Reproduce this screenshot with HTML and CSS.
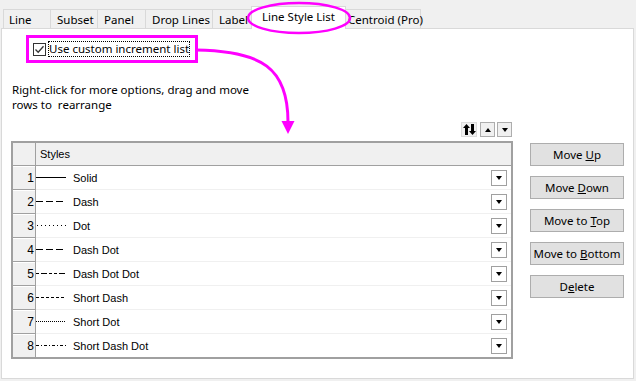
FILE: index.html
```html
<!DOCTYPE html>
<html>
<head>
<meta charset="utf-8">
<link rel="stylesheet" href="styles.css">
</head>
<body>
<div class="dialog">
  <div class="tabs">
    <div class="tab t-line">Line</div>
    <div class="tab t-subset">Subset</div>
    <div class="tab t-panel">Panel</div>
    <div class="tab t-drop">Drop Lines</div>
    <div class="tab t-label">Label</div>
    <div class="tab t-style active">Line Style List</div>
    <div class="tab t-centroid">Centroid (Pro)</div>
  </div>
  <div class="panel">
    <label class="check-frame">
      <span class="checkbox"><svg width="11" height="11" viewBox="0 0 11 11"><path d="M1.5 5.5 L4.2 8.3 L9.5 2.2" fill="none" stroke="#333" stroke-width="1.3"/></svg></span>
      <span class="check-label">Use custom increment list</span>
    </label>
    <p class="hint">Right-click for more options, drag and move<br>rows to&nbsp; rearrange</p>
    <div class="work">
      <div class="grid-col">
        <div class="grid-tools">
          <span class="tool sort"><svg width="13" height="11" viewBox="0 0 13 11"><path d="M3.5 0 L7 4 L5 4 L5 11 L2 11 L2 4 L0 4 Z" fill="#000"/><path d="M9.5 11 L6 7 L8 7 L8 0 L11 0 L11 7 L13 7 Z" fill="#000"/></svg></span>
          <span class="tool"><span class="tri-up"></span></span>
          <span class="tool"><span class="tri-down"></span></span>
        </div>
        <table class="grid">
          <thead>
            <tr><th class="corner"></th><th class="col-head">Styles</th></tr>
          </thead>
          <tbody>
            <tr><td class="rh">1</td><td class="cell"><div class="cell-in"><svg class="sample" width="30" height="3"><line x1="0" y1="1.5" x2="30" y2="1.5" stroke="#000" stroke-width="1"/></svg><span class="name">Solid</span><span class="dd"><span class="tri-down"></span></span></div></td></tr>
            <tr><td class="rh">2</td><td class="cell"><div class="cell-in"><svg class="sample" width="30" height="3"><line x1="0" y1="1.5" x2="30" y2="1.5" stroke="#000" stroke-width="1" stroke-dasharray="7 3"/></svg><span class="name">Dash</span><span class="dd"><span class="tri-down"></span></span></div></td></tr>
            <tr><td class="rh">3</td><td class="cell"><div class="cell-in"><svg class="sample" width="30" height="3"><line x1="1" y1="1.5" x2="30" y2="1.5" stroke="#000" stroke-width="1" stroke-dasharray="1 3"/></svg><span class="name">Dot</span><span class="dd"><span class="tri-down"></span></span></div></td></tr>
            <tr><td class="rh">4</td><td class="cell"><div class="cell-in"><svg class="sample" width="30" height="3"><line x1="0" y1="1.5" x2="30" y2="1.5" stroke="#000" stroke-width="1" stroke-dasharray="7 3"/></svg><span class="name">Dash Dot</span><span class="dd"><span class="tri-down"></span></span></div></td></tr>
            <tr><td class="rh">5</td><td class="cell"><div class="cell-in"><svg class="sample" width="30" height="3"><line x1="0" y1="1.5" x2="30" y2="1.5" stroke="#000" stroke-width="1" stroke-dasharray="3 2 6 2 3 2"/></svg><span class="name">Dash Dot Dot</span><span class="dd"><span class="tri-down"></span></span></div></td></tr>
            <tr><td class="rh">6</td><td class="cell"><div class="cell-in"><svg class="sample" width="30" height="3"><line x1="0" y1="1.5" x2="30" y2="1.5" stroke="#000" stroke-width="1" stroke-dasharray="3 2"/></svg><span class="name">Short Dash</span><span class="dd"><span class="tri-down"></span></span></div></td></tr>
            <tr><td class="rh">7</td><td class="cell"><div class="cell-in"><svg class="sample" width="30" height="3"><line x1="0" y1="1.5" x2="30" y2="1.5" stroke="#000" stroke-width="1" stroke-dasharray="1 1"/></svg><span class="name">Short Dot</span><span class="dd"><span class="tri-down"></span></span></div></td></tr>
            <tr><td class="rh">8</td><td class="cell"><div class="cell-in"><svg class="sample" width="30" height="3"><line x1="0" y1="1.5" x2="30" y2="1.5" stroke="#000" stroke-width="1" stroke-dasharray="3 2 1 2"/></svg><span class="name">Short Dash Dot</span><span class="dd"><span class="tri-down"></span></span></div></td></tr>
          </tbody>
        </table>
      </div>
      <div class="btn-col">
        <button class="btn">Move <u>U</u>p</button>
        <button class="btn">Move <u>D</u>own</button>
        <button class="btn">Move to <u>T</u>op</button>
        <button class="btn">Move to <u>B</u>ottom</button>
        <button class="btn">D<u>e</u>lete</button>
      </div>
    </div>
  </div>
  <svg class="annot" width="636" height="381" viewBox="0 0 636 381">
    <ellipse cx="299" cy="18" rx="51" ry="15" fill="none" stroke="#ff00ff" stroke-width="2.5"/>
    <path d="M196 50 C 262 51, 288 68, 288 122" fill="none" stroke="#ff00ff" stroke-width="3"/>
    <path d="M281.5 121 L294.5 121 L288 134 Z" fill="#ff00ff"/>
  </svg>
</div>
</body>
</html>
```
FILE: styles.css
```css
html, body {
  margin: 0;
  padding: 0;
}
body {
  background: #f0f0f0;
  font-family: "Noto Sans", "Open Sans", sans-serif;
  font-size: 11.5px;
  color: #000;
}
.dialog {
  position: relative;
  width: 636px;
  height: 381px;
  overflow: hidden;
}
.tabs {
  display: flex;
  padding: 9px 0 0 3px;
  height: 19px;
  align-items: flex-end;
}
.tab {
  box-sizing: border-box;
  height: 19px;
  border: 1px solid #d9d9d9;
  border-bottom: none;
  border-right: none;
  padding: 0 0 0 5px;
  line-height: 19px;
  white-space: nowrap;
  background: #f0f0f0;
}
.t-line { width: 47px; }
.t-subset { width: 47px; padding-left: 6px; }
.t-panel { width: 48px; padding-left: 6px; }
.t-drop { width: 67px; padding-left: 6px; }
.t-label { width: 39px; padding-left: 6px; }
.t-centroid { width: 75px; padding-left: 2px; border-right: 1px solid #d9d9d9; }
.tab.active {
  width: 95px;
  height: 23px;
  margin-bottom: -1px;
  background: #fff;
  position: relative;
  z-index: 1;
  padding-left: 10px;
  line-height: 19px;
  border-right: 1px solid #d9d9d9;
}
.t-style + .t-centroid { border-left: none; }
.panel {
  box-sizing: border-box;
  margin-left: 1px;
  width: 633px;
  height: 351px;
  background: #fff;
  border: 1px solid #d9d9d9;
  padding: 6px 0 0 0;
}
.check-frame {
  display: flex;
  align-items: center;
  box-sizing: border-box;
  width: 172px;
  height: 28px;
  margin-left: 24px;
  border: 3px solid #ff00ff;
  padding-left: 4px;
}
.checkbox {
  box-sizing: border-box;
  width: 13px;
  height: 13px;
  border: 1px solid #333;
  background: #fff;
  display: flex;
  align-items: center;
  justify-content: center;
}
.check-label {
  margin-left: 3px;
  outline: 1px dotted #000;
  line-height: 14px;
  white-space: nowrap;
}
.hint {
  margin: 19px 0 0 10px;
  line-height: 15px;
}
.work {
  display: flex;
  margin: 10px 0 0 9px;
}
.grid-col {
  width: 502px;
}
.grid-tools {
  display: flex;
  justify-content: flex-end;
  gap: 2px;
  padding-right: 1px;
  height: 15px;
  margin-bottom: 4px;
}
.tool {
  box-sizing: border-box;
  width: 15px;
  height: 15px;
  border: 1px solid #adadad;
  background: #f0f0f0;
  display: flex;
  align-items: center;
  justify-content: center;
}
.tool.sort {
  width: 16px;
  margin-right: 1px;
  border-color: #dcdcdc;
}
.tri-up {
  width: 0;
  height: 0;
  border-left: 3.5px solid transparent;
  border-right: 3.5px solid transparent;
  border-bottom: 4px solid #000;
}
.tri-down {
  width: 0;
  height: 0;
  border-left: 3.5px solid transparent;
  border-right: 3.5px solid transparent;
  border-top: 4px solid #000;
}
.grid {
  box-sizing: border-box;
  width: 502px;
  border-collapse: collapse;
  border: 2px solid #a0a0a0;
  font-family: "Liberation Sans", Arial, sans-serif;
  font-size: 11px;
}
.grid th, .grid td {
  padding: 0;
}
.corner {
  width: 21px;
  height: 22px;
  background: #f0f0f0;
  border-right: 1px solid #a0a0a0;
  border-bottom: 1px solid #a0a0a0;
}
.col-head {
  text-align: left;
  font-weight: normal;
  background: #f0f0f0;
  border-bottom: 1px solid #a0a0a0;
  padding-left: 4px !important;
  height: 22px;
}
.rh {
  height: 23px;
  width: 21px;
  text-align: right;
  padding-right: 1px !important;
  background: #f0f0f0;
  border-right: 1px solid #a0a0a0;
  border-bottom: 1px solid #a0a0a0;
  box-shadow: inset 0 1px 0 #fff;
  font-size: 12px;
}
.cell {
  border-bottom: 1px solid #f0f0f0;
}
tbody tr:last-child .cell, tbody tr:last-child .rh {
  border-bottom: none;
}
.cell-in {
  display: flex;
  align-items: center;
  height: 23px;
}
.sample {
  display: block;
  flex: none;
}
.name {
  margin-left: 7px;
  flex: 1;
  font-size: 11px;
}
.dd {
  box-sizing: border-box;
  width: 16px;
  height: 16px;
  border: 1px solid #a0a0a0;
  background: #fff;
  display: flex;
  align-items: center;
  justify-content: center;
  margin-right: 4px;
}
.btn-col {
  display: flex;
  flex-direction: column;
  gap: 10px;
  margin-left: 17px;
  padding-top: 21px;
}
.btn {
  box-sizing: border-box;
  width: 94px;
  height: 23px;
  background: #e1e1e1;
  border: 1px solid #adadad;
  font-family: "Noto Sans", "Open Sans", sans-serif;
  font-size: 11.5px;
  color: #000;
  padding: 0;
  white-space: nowrap;
}
.annot {
  position: absolute;
  left: 0;
  top: 0;
  pointer-events: none;
  z-index: 5;
}
```
